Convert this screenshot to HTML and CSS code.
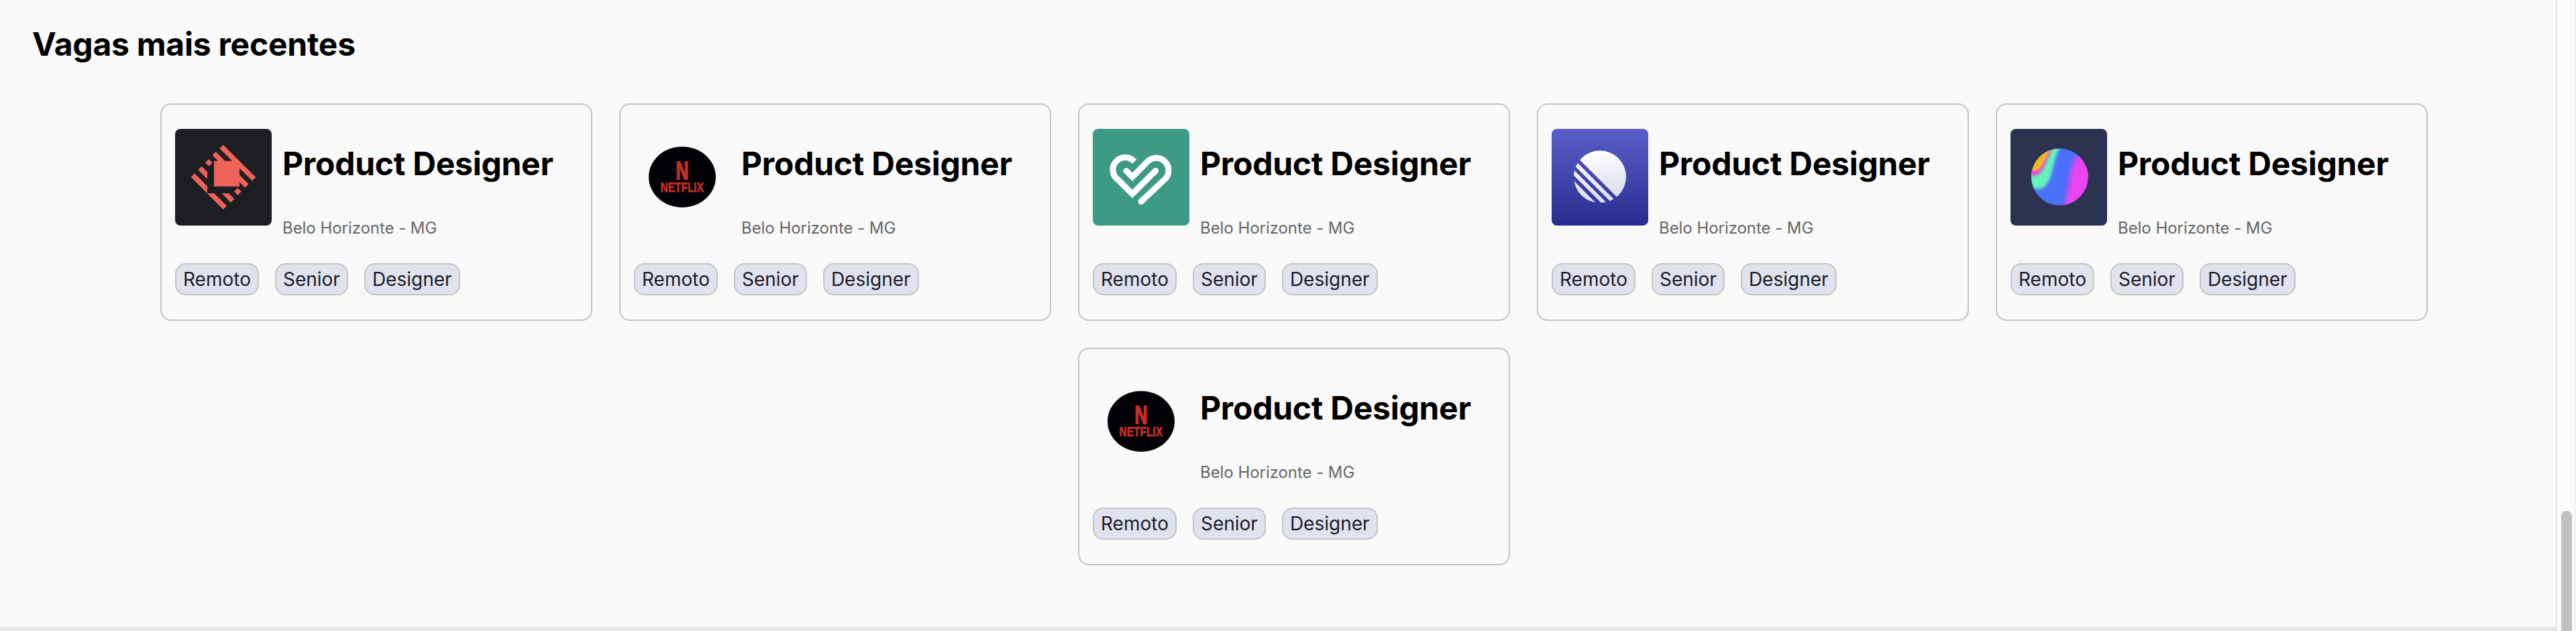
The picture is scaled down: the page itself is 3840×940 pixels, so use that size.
FILE: index.html
```html
<!DOCTYPE html>
<html lang="pt-BR">
<head>
<meta charset="utf-8">
<title>Vagas mais recentes</title>
<link rel="stylesheet" href="styles.css">
</head>
<body>
<svg class="defs" width="0" height="0" aria-hidden="true">
  <defs>
    <linearGradient id="indigo" x1="0" y1="0" x2="0" y2="1"><stop offset="0" stop-color="#5a5fc8"/><stop offset="1" stop-color="#282b8f"/></linearGradient>
    <linearGradient id="moon" gradientUnits="userSpaceOnUse" x1="190" y1="97" x2="240" y2="331"><stop offset="0" stop-color="#ffffff"/><stop offset="1" stop-color="#d9d9ee"/></linearGradient>
    <clipPath id="moonClip"><circle cx="216" cy="214" r="117"/></clipPath>
    <clipPath id="orbClip"><circle cx="220" cy="215" r="127"/></clipPath>
    <filter id="soft12" x="-30%" y="-30%" width="160%" height="160%"><feGaussianBlur stdDeviation="11"/></filter>
    <filter id="soft6" x="-30%" y="-30%" width="160%" height="160%"><feGaussianBlur stdDeviation="7"/></filter>
    <filter id="soft2" x="-30%" y="-30%" width="160%" height="160%"><feGaussianBlur stdDeviation="3"/></filter>
    <symbol id="diamond" viewBox="0 0 432 432">
      <rect width="432" height="432" fill="#1d1e22"/>
      <g transform="translate(-63 -66)" fill="#ee6259">
        <path d="M278 137 424 282 408 298 351 242V272L392 313 376 329 351 304V323H237V209H255L230 184 245 168 286 209H318L262 153Z"/>
        <path d="M214 201 230 217 214 233 198 217ZM343 330 359 346 343 362 327 346Z"/>
        <path d="M182 233 207 258V290L166 249ZM272 354H303L328 379 312 395Z"/>
        <path d="M150 265 207 322V354H238L294 410 278 426 134 281Z"/>
      </g>
    </symbol>
    <symbol id="netflix" viewBox="0 0 144 144">
      <ellipse cx="72" cy="71.7" rx="50" ry="45.3" fill="#020206"/>
      <g class="netflix-text">
        <text class="netflix-n" x="62.5" y="75" font-size="36" textLength="19" lengthAdjust="spacingAndGlyphs">N</text>
        <text x="39.5" y="94" font-size="20" textLength="64.5" lengthAdjust="spacingAndGlyphs">NETFLIX</text>
      </g>
    </symbol>
    <symbol id="heart" viewBox="0 0 432 432">
      <rect width="432" height="432" fill="#3d9b84"/>
      <g transform="translate(-27 -36)" fill="none" stroke="#fff" stroke-width="27">
        <path d="M213 182A55 55 0 1 0 141 264L204 327 308 223"/>
        <path d="M177 224 204 251 267 187A55.500 55.500 0 1 1 345 265L243 361"/>
        <g stroke-linecap="round"><path d="M300 231 308 223M177 224l8 8M251 353.500 243 361"/></g>
      </g>
    </symbol>
    <symbol id="stripes" viewBox="0 0 432 432">
      <rect width="432" height="432" fill="url(#indigo)"/>
      <path clip-path="url(#moonClip)" fill="url(#moon)" d="M0 13 400 413V0H0ZM0 36 400 436V462L0 62ZM0 84 400 484V509L0 109ZM0 133 400 533H0Z"/>
    </symbol>
    <symbol id="orb" viewBox="0 0 432 432">
      <rect width="432" height="432" fill="#2b324f"/>
      <g clip-path="url(#orbClip)">
        <rect x="80" y="80" width="280" height="280" fill="#4a70fc"/>
        <path d="M400 90 310 110C255 150 270 270 235 360H400Z" fill="#ec43ef" filter="url(#soft12)"/>
        <path d="M60 60H240C188 105 198 220 150 262 120 280 90 262 60 240Z" fill="#62f5bb" filter="url(#soft6)"/>
        <path d="M60 60H212C172 90 162 170 128 202 110 215 85 210 60 195Z" fill="#ea49dc" filter="url(#soft6)"/>
        <path d="M60 60H205C170 90 158 142 130 178 114 194 90 187 60 172Z" fill="#f5b820" filter="url(#soft2)"/>
      </g>
    </symbol>
  </defs>
</svg>
<div class="page">
  <main class="jobs">
    <h1 class="heading">Vagas mais recentes</h1>
    <div class="cards">
      <article class="card">
        <div class="top"><svg class="logo"><use href="#diamond"/></svg><div class="info"><h2 class="title">Product Designer</h2><p class="city">Belo Horizonte - MG</p></div></div>
        <div class="tags"><span class="tag">Remoto</span><span class="tag">Senior</span><span class="tag">Designer</span></div>
      </article>
      <article class="card">
        <div class="top"><svg class="logo"><use href="#netflix"/></svg><div class="info"><h2 class="title">Product Designer</h2><p class="city">Belo Horizonte - MG</p></div></div>
        <div class="tags"><span class="tag">Remoto</span><span class="tag">Senior</span><span class="tag">Designer</span></div>
      </article>
      <article class="card">
        <div class="top"><svg class="logo"><use href="#heart"/></svg><div class="info"><h2 class="title">Product Designer</h2><p class="city">Belo Horizonte - MG</p></div></div>
        <div class="tags"><span class="tag">Remoto</span><span class="tag">Senior</span><span class="tag">Designer</span></div>
      </article>
      <article class="card">
        <div class="top"><svg class="logo"><use href="#stripes"/></svg><div class="info"><h2 class="title">Product Designer</h2><p class="city">Belo Horizonte - MG</p></div></div>
        <div class="tags"><span class="tag">Remoto</span><span class="tag">Senior</span><span class="tag">Designer</span></div>
      </article>
      <article class="card">
        <div class="top"><svg class="logo"><use href="#orb"/></svg><div class="info"><h2 class="title">Product Designer</h2><p class="city">Belo Horizonte - MG</p></div></div>
        <div class="tags"><span class="tag">Remoto</span><span class="tag">Senior</span><span class="tag">Designer</span></div>
      </article>
      <article class="card">
        <div class="top"><svg class="logo"><use href="#netflix"/></svg><div class="info"><h2 class="title">Product Designer</h2><p class="city">Belo Horizonte - MG</p></div></div>
        <div class="tags"><span class="tag">Remoto</span><span class="tag">Senior</span><span class="tag">Designer</span></div>
      </article>
    </div>
    <div class="divider"></div>
  </main>
  <div class="track"><div class="thumb"></div></div>
</div>
</body>
</html>
```

FILE: styles.css
```css
* { box-sizing: border-box; margin: 0; }
body { background: #f9f9f9; font-family: Inter, "Liberation Sans", sans-serif; color: #000; overflow: hidden; }
.defs { position: absolute; }
.page { display: flex; height: 940px; }
.jobs { flex: 1; display: flex; flex-direction: column; padding-top: 37px; }
.heading { padding-left: 48px; font-size: 48px; font-weight: 700; letter-spacing: -0.25px; line-height: 58px; }
.cards { flex: 1; display: flex; flex-wrap: wrap; justify-content: center; align-content: flex-start; gap: 40px; padding: 59px 0 0 48px; }
.card { display: flex; flex-direction: column; gap: 38px; width: 644px; height: 324px; padding: 36px 20px; border: 2px solid #c4c4c4; border-radius: 16px; }
.top { display: flex; gap: 16px; height: 162px; }
.logo { width: 144px; height: 144px; border-radius: 8px; flex: none; }
.netflix-text { font-family: "Liberation Sans", sans-serif; font-weight: 700; fill: #c12f27; stroke: #c12f27; stroke-width: 0.7px; }
.netflix-n { stroke-width: 1.8px; }
.info { display: flex; flex-direction: column; justify-content: space-between; padding-top: 23px; }
.title { font-size: 48px; font-weight: 700; letter-spacing: -0.25px; line-height: 58px; white-space: nowrap; }
.city { font-size: 24px; letter-spacing: -0.05px; line-height: 29px; color: #666; }
.tags { display: flex; gap: 24px; }
.tag { height: 48px; padding: 0 10px; border: 2px solid #c4c4c4; border-radius: 16px; background: #e0e3ee; color: #1b1c28; font-size: 28px; line-height: 44px; }
.divider { height: 6px; background: #e7e7e7; }
.track { width: 30px; border-left: 2px solid #e3e3e3; border-right: 2px solid #f0f0f0; background: #fbfbfb; padding: 761px 4px 0 6px; }
.thumb { height: 179px; border-radius: 8px 8px 0 0; background: #c1c1c1; }
```
